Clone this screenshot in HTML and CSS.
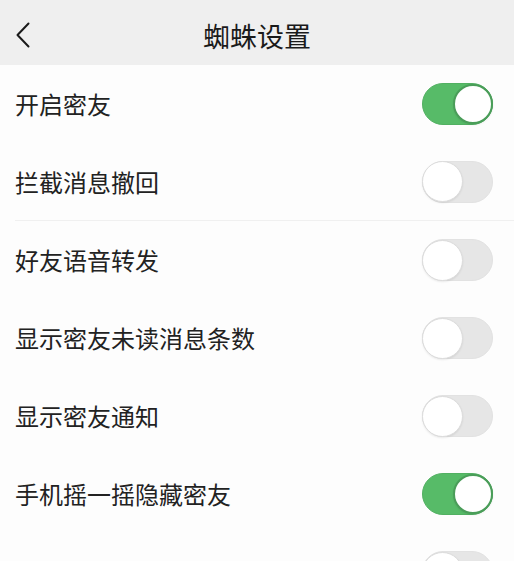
FILE: index.html
```html
<!DOCTYPE html>
<html lang="zh-CN">
<head>
<meta charset="utf-8">
<title>蜘蛛设置</title>
<link rel="stylesheet" href="styles.css">
</head>
<body>
<header class="nav">
  <div class="nav-left">
    <svg class="back" width="16" height="26" viewBox="0 0 16 26" aria-hidden="true">
      <path d="M13.5 1.5 L2.5 13 L13.5 24.5" fill="none" stroke="#1a1a1a" stroke-width="2" stroke-linecap="round" stroke-linejoin="round"/>
    </svg>
  </div>
  <h1 class="title">蜘蛛设置</h1>
  <div class="nav-right"></div>
</header>
<main class="list">
  <div class="row"><span class="label">开启密友</span><span class="switch on"><span class="knob"></span></span></div>
  <div class="row divided"><span class="label">拦截消息撤回</span><span class="switch"><span class="knob"></span></span></div>
  <div class="row"><span class="label">好友语音转发</span><span class="switch"><span class="knob"></span></span></div>
  <div class="row"><span class="label">显示密友未读消息条数</span><span class="switch"><span class="knob"></span></span></div>
  <div class="row"><span class="label">显示密友通知</span><span class="switch"><span class="knob"></span></span></div>
  <div class="row"><span class="label">手机摇一摇隐藏密友</span><span class="switch on"><span class="knob"></span></span></div>
  <div class="row"><span class="label">隐藏聊天界面密友会话</span><span class="switch"><span class="knob"></span></span></div>
</main>
</body>
</html>
```
FILE: styles.css
```css
html, body {
  margin: 0;
  padding: 0;
}
body {
  background: #fdfdfd;
  font-family: "Noto Sans CJK SC", "Noto Sans", sans-serif;
  color: #222;
  overflow: hidden;
}
.nav {
  height: 65px;
  background: #efefef;
  display: grid;
  grid-template-columns: 1fr auto 1fr;
  align-items: center;
}
.nav-left {
  padding-left: 15px;
  display: flex;
  align-items: center;
  padding-top: 4px;
}
.title {
  margin: 0;
  font-size: 27px;
  font-weight: 400;
  color: #1a1a1a;
  line-height: 1;
  padding-top: 5px;
}
.list {
  display: flex;
  flex-direction: column;
}
.row {
  height: 78px;
  margin-left: 15px;
  padding-right: 21px;
  display: flex;
  align-items: center;
  justify-content: space-between;
  box-sizing: border-box;
}
.row.divided {
  border-bottom: 1px solid #f0f0f0;
}
.label {
  font-size: 24px;
  line-height: 1;
  color: #222;
}
.switch {
  width: 71px;
  height: 42px;
  border-radius: 21px;
  background: #e6e6e6;
  box-sizing: border-box;
  border: 1px solid #e2e2e2;
  display: flex;
  align-items: center;
  justify-content: flex-start;
}
.switch .knob {
  width: 41px;
  height: 41px;
  border-radius: 50%;
  background: #fff;
  box-sizing: border-box;
  border: 1.5px solid #dcdcdc;
  box-shadow: 0 1px 2px rgba(0,0,0,0.08);
  margin-left: -1px;
}
.switch.on {
  background: #57bb68;
  border-color: #52b062;
  justify-content: flex-end;
}
.switch.on .knob {
  border: 2px solid #4a9d59;
  margin-left: 0;
  margin-right: -1px;
  width: 40px;
  height: 40px;
}
```
